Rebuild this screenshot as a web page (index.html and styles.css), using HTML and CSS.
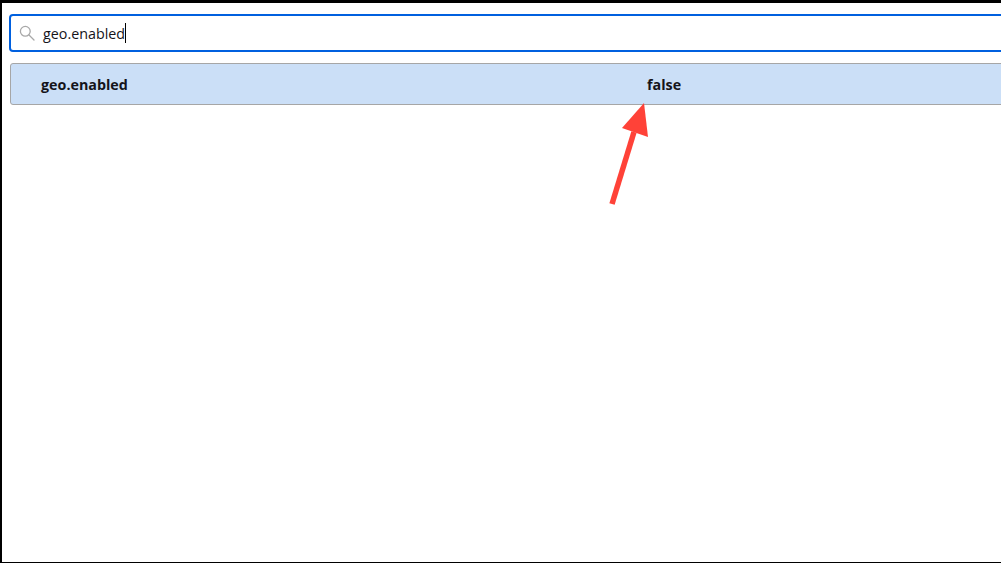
FILE: index.html
```html
<!DOCTYPE html>
<html lang="en">
<head>
<meta charset="utf-8">
<title>about:config</title>
<link rel="stylesheet" href="styles.css">
</head>
<body>
<div class="frame">
  <div class="search">
    <svg class="search-icon" width="16" height="16" viewBox="0 0 16 16" fill="none" stroke="#a8a8a8" stroke-width="1.3">
      <circle cx="6.3" cy="6.3" r="4.9"/>
      <path d="M10 10l5 5" stroke-linecap="round"/>
    </svg>
    <span class="query">geo.enabled</span><span class="caret"></span>
  </div>
  <div class="row">
    <span class="pref-name">geo.enabled</span>
    <span class="pref-value">false</span>
  </div>
  <svg class="arrow" width="60" height="110" viewBox="0 0 60 110">
    <path d="M14 104L36 32" stroke="#ff4238" stroke-width="5.5" fill="none"/>
    <path d="M46 3L24 28L50 37Z" fill="#ff4238"/>
  </svg>
</div>
</body>
</html>
```
FILE: styles.css
```css
html, body {
  margin: 0;
  padding: 0;
  height: 100%;
  background: #000;
  overflow: hidden;
}
.frame {
  position: relative;
  box-sizing: border-box;
  height: 559px;
  margin: 3px 0 0 2px;
  padding: 11px 0 0 7px;
  background: #fff;
  font-family: "Open Sans", "Noto Sans", sans-serif;
  color: #15141a;
  overflow: hidden;
}
.search {
  box-sizing: border-box;
  display: flex;
  align-items: center;
  height: 38px;
  margin-right: -8px;
  padding-left: 8px;
  border: 2px solid #0060df;
  border-radius: 4px;
  font-size: 14.3px;
}
.search-icon {
  flex: none;
  margin-right: 8px;
}
.caret {
  width: 1px;
  height: 20px;
  margin-left: 0;
  background: #000;
}
.row {
  box-sizing: border-box;
  display: flex;
  align-items: center;
  height: 42px;
  margin: 11px -8px 0 1px;
  padding-left: 30px;
  border: 1px solid #a6a6a6;
  border-radius: 3px;
  background: #cbdff7;
  font-size: 14.3px;
  font-weight: 700;
}
.pref-name {
  width: 606px;
}
.arrow {
  position: absolute;
  left: 596px;
  top: 97px;
}
```
